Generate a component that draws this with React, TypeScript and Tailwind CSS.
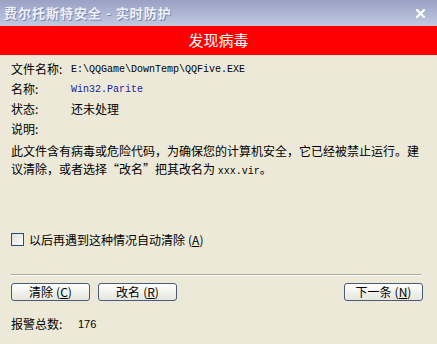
import React from 'react'

const cjk = { fontFamily: '"Noto Sans CJK SC", "Liberation Sans", sans-serif' }
const mono = { fontFamily: '"Liberation Mono", "Noto Sans CJK SC", monospace' }

function XpButton({ label, keyChar, className = '' }: { label: string; keyChar: string; className?: string }) {
  return (
    <button
      className={`h-[18px] w-[79px] rounded-[3px] border border-[#4a5a78] bg-gradient-to-b from-[#ffffff] to-[#e6e6dc] text-[12px] leading-none text-black flex items-center justify-center ${className}`}
      style={cjk}
    >
      {label}
      <span className="ml-[3px]">(<u>{keyChar}</u>)</span>
    </button>
  )
}

export default function App() {
  const rows = [
    { label: '文件名称:', value: 'E:\\QQGame\\DownTemp\\QQFive.EXE', kind: 'mono' },
    { label: '名称:', value: 'Win32.Parite', kind: 'blue' },
    { label: '状态:', value: '还未处理', kind: 'cjk' },
    { label: '说明:', value: '', kind: 'cjk' }
  ]

  return (
    <div className="w-[437px] h-[344px] bg-[#ece9d8] overflow-hidden flex flex-col text-black" style={cjk}>
      {/* title bar */}
      <div className="h-[26px] bg-gradient-to-b from-[#98a2c4] to-[#c2c9e0] flex items-center justify-between pl-[4px] pr-[12px]">
        <span className="text-[13px] font-bold text-[#eef0f8] tracking-[1px] [text-shadow:1px_1px_0_#7d86a8]">
          费尔托斯特安全 - 实时防护
        </span>
        <svg width="9" height="9" viewBox="0 0 9 9">
          <path d="M1 1 L8 8 M8 1 L1 8" stroke="#ffffff" strokeWidth="2.2" strokeLinecap="square" />
        </svg>
      </div>

      {/* red header */}
      <div className="h-[29px] bg-[#ff0000] flex items-center justify-center">
        <span className="text-[15px] text-white">发现病毒</span>
      </div>

      <div className="pl-[11px] pr-[14px] pt-[4px] flex flex-col">
        {rows.map((r) => (
          <div key={r.label} className="h-[20px] flex items-center text-[12px]">
            <span className="w-[60px] shrink-0">{r.label}</span>
            {r.kind === 'mono' && <span className="text-[10px]" style={mono}>{r.value}</span>}
            {r.kind === 'blue' && <span className="text-[10px] text-[#1a1a9c]" style={mono}>{r.value}</span>}
            {r.kind === 'cjk' && <span>{r.value}</span>}
          </div>
        ))}

        <p className="mt-[3px] text-[12px] leading-[18px] whitespace-nowrap">
          此文件含有病毒或危险代码，为确保您的计算机安全，它已经被禁止运行。建
          <br />
          议清除，或者选择“改名”把其改名为 <span className="text-[10px]" style={mono}>xxx.vir</span>。
        </p>

        <label className="mt-[52px] flex items-center text-[12px] h-[13px]">
          <span className="w-[13px] h-[13px] border border-[#1c5180] bg-gradient-to-br from-[#dcdcd6] to-[#ffffff] mr-[5px]" />
          以后再遇到这种情况自动清除<span className="ml-[3px]">(<u>A</u>)</span>
        </label>

        <div className="mt-[28px] mr-[2px] border-t border-[#aca899] border-b border-b-white" />

        <div className="mt-[7px] flex items-center">
          <XpButton label="清除" keyChar="C" />
          <XpButton label="改名" keyChar="R" className="ml-[8px]" />
          <XpButton label="下一条" keyChar="N" className="ml-auto" />
        </div>

        <div className="mt-[14px] flex items-center text-[12px]">
          <span className="w-[67px]">报警总数:</span>
          <span className="text-[11px]" style={{ fontFamily: '"Liberation Sans", sans-serif' }}>176</span>
        </div>
      </div>
    </div>
  )
}
